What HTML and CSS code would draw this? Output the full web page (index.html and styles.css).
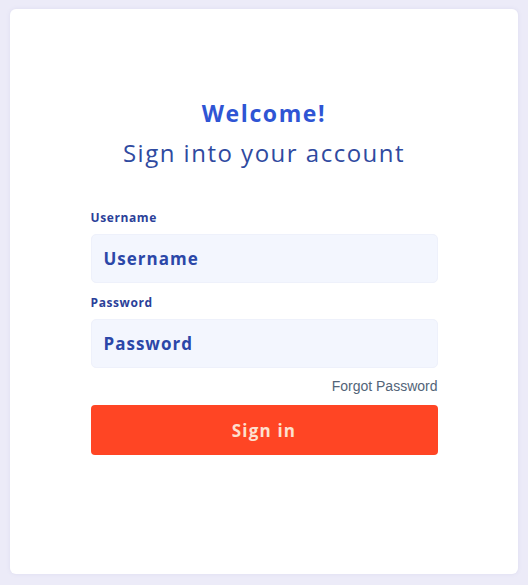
FILE: index.html
```html
<!DOCTYPE html>
<html lang="en">
<head>
<meta charset="utf-8">
<title>Sign in</title>
<link rel="stylesheet" href="styles.css">
</head>
<body>
<main class="card">
  <h1 class="title">Welcome!</h1>
  <h2 class="subtitle">Sign into your account</h2>
  <form class="form">
    <label class="label" for="username">Username</label>
    <input class="input" id="username" type="text" placeholder="Username">
    <label class="label label-gap" for="password">Password</label>
    <input class="input" id="password" type="password" placeholder="Password">
    <a class="forgot" href="#">Forgot Password</a>
    <button class="btn" type="button">Sign in</button>
  </form>
</main>
</body>
</html>
```
FILE: styles.css
```css
html, body {
  margin: 0;
  padding: 0;
}
body {
  background: #ecebf8;
  font-family: "Open Sans", "Liberation Sans", sans-serif;
  width: 528px;
  height: 585px;
  overflow: hidden;
}
.card {
  box-sizing: border-box;
  margin: 9px 10px 0 10px;
  height: 565px;
  background: #ffffff;
  border-radius: 6px;
  box-shadow: 0 0 4px rgba(120, 120, 180, 0.12);
  display: flex;
  flex-direction: column;
  align-items: center;
  padding-top: 89px;
}
.title {
  margin: 0;
  font-size: 23px;
  line-height: 30px;
  font-weight: 700;
  letter-spacing: 1.6px;
  color: #2f55d4;
}
.subtitle {
  margin: 9px 0 0 0;
  font-size: 24px;
  line-height: 32px;
  font-weight: 400;
  letter-spacing: 1.5px;
  color: #2f4aa0;
}
.form {
  width: 347px;
  margin-top: 41px;
  display: flex;
  flex-direction: column;
}
.label {
  font-size: 12px;
  line-height: 16px;
  font-weight: 700;
  letter-spacing: 0.6px;
  color: #2b3f99;
  margin-bottom: 8px;
}
.label-gap {
  margin-top: 12px;
}
.input {
  box-sizing: border-box;
  height: 49px;
  border: 1px solid #eef1fb;
  border-radius: 5px;
  background: #f3f6fe;
  padding: 0 12px;
  font-family: inherit;
  font-size: 17px;
  font-weight: 700;
  letter-spacing: 1px;
  color: #2b47a8;
  outline: none;
}
.input::placeholder {
  color: #2b47a8;
  opacity: 1;
}
.forgot {
  align-self: flex-end;
  margin-top: 10px;
  font-family: "Liberation Sans", Arial, sans-serif;
  font-size: 14px;
  line-height: 16px;
  color: #526478;
  text-decoration: none;
}
.btn {
  margin-top: 11px;
  height: 50px;
  border: none;
  border-radius: 4px;
  background: #ff4524;
  color: #fde0cf;
  font-family: inherit;
  font-size: 17px;
  font-weight: 700;
  letter-spacing: 1.2px;
  cursor: pointer;
}
```
